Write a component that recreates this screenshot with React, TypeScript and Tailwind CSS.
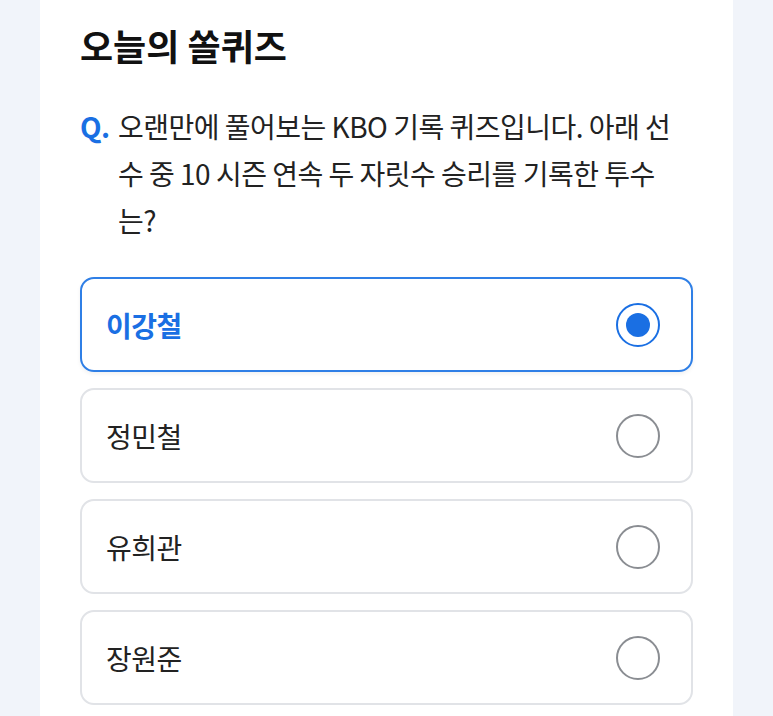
import React from "react";

const options = ["이강철", "정민철", "유희관", "장원준"];

export default function App() {
  const selected = 0;
  return (
    <div
      className="min-h-[716px] w-[773px] bg-[#f1f4fa] px-[40px]"
      style={{ fontFamily: '"Noto Sans CJK KR", "Noto Sans", sans-serif' }}
    >
      <div className="min-h-[716px] bg-white px-[40px] pt-[22px]">
        <h1 className="text-[36px] font-bold leading-[46px] tracking-[0px] text-[#111]">
          오늘의 쏠퀴즈
        </h1>
        <div className="mt-[35px] flex text-[28px] leading-[47px] tracking-[-0.5px] text-[#222]">
          <span className="w-[38px] shrink-0 font-bold text-[#1a6fe3]">Q.</span>
          <p className="whitespace-nowrap">
            오랜만에 풀어보는 KBO 기록 퀴즈입니다. 아래 선
            <br />
            수 중 10 시즌 연속 두 자릿수 승리를 기록한 투수
            <br />
            는?
          </p>
        </div>
        <div className="mt-[33px] flex flex-col gap-[16px]">
          {options.map((o, i) => {
            const on = i === selected;
            return (
              <div
                key={o}
                className={
                  on
                    ? "flex h-[95px] items-center justify-between rounded-[14px] border-2 border-[#2f7fe6] pl-[24px] pr-[31px] shadow-[0_2px_4px_rgba(0,0,0,0.06)]"
                    : "flex h-[95px] items-center justify-between rounded-[14px] border-2 border-[#e1e3e7] pl-[24px] pr-[31px]"
                }
              >
                <span
                  className={
                    on
                      ? "text-[28px] font-bold tracking-[-0.5px] text-[#1a6fe3]"
                      : "text-[28px] tracking-[-0.5px] text-[#222]"
                  }
                >
                  {o}
                </span>
                {on ? (
                  <span className="flex h-[44px] w-[44px] items-center justify-center rounded-full border-[2.5px] border-[#1a6fe3]">
                    <span className="h-[24px] w-[24px] rounded-full bg-[#1a6fe3]" />
                  </span>
                ) : (
                  <span className="h-[44px] w-[44px] rounded-full border-[2.5px] border-[#8a8d92]" />
                )}
              </div>
            );
          })}
        </div>
      </div>
    </div>
  );
}
